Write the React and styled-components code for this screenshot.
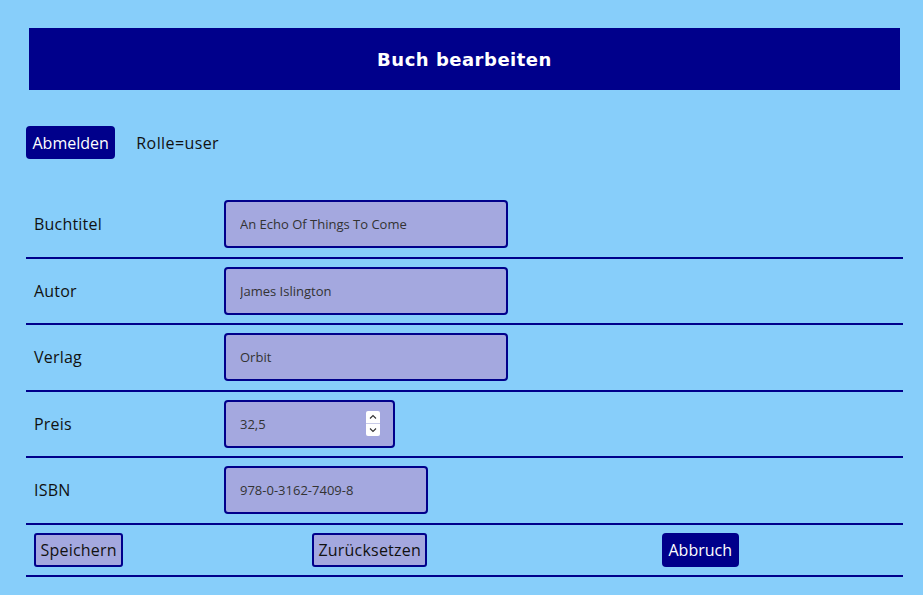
import React from "react";
import styled, { createGlobalStyle } from "styled-components";

const Global = createGlobalStyle`
  html, body { margin: 0; padding: 0; background: #87cefa; }
  body { font-family: "Open Sans", "Noto Sans", sans-serif; color: #111; }
  * { box-sizing: border-box; }
`;

const Page = styled.div`
  padding-top: 28px;
  min-height: 595px;
  background: #87cefa;
`;

const Header = styled.header`
  margin-left: 29px;
  width: 871px;
  height: 62px;
  background: #00008b;
  display: flex;
  align-items: center;
  justify-content: center;
`;

const Title = styled.h1`
  margin: 0;
  font-family: "DejaVu Sans", sans-serif;
  font-weight: bold;
  font-size: 18px;
  letter-spacing: 0.5px;
  color: #fff;
`;

const Toolbar = styled.div`
  margin: 36px 0 0 26px;
  display: flex;
  align-items: center;
  gap: 21px;
`;

const DarkButton = styled.button`
  height: 33px;
  padding: 0 6.5px;
  border: none;
  border-radius: 4px;
  background: #00008b;
  color: #fff;
  font-family: "Open Sans", sans-serif;
  font-size: 16px;
  cursor: pointer;
`;

const RoleText = styled.span`
  font-size: 16px;
  letter-spacing: 0.4px;
  color: #111;
`;

const Form = styled.div`
  margin: 33px 0 0 26px;
  width: 877px;
`;

const Row = styled.div`
  display: grid;
  grid-template-columns: ${(p) => p.$cols || "190px 1fr"};
  align-items: center;
  border-bottom: 2px solid #00008b;
`;

const Cell = styled.div`
  padding: 8.25px 8px;
  display: flex;
  align-items: center;
`;

const Label = styled.span`
  font-size: 16px;
  letter-spacing: 0.2px;
  color: #111;
`;

const fieldBox = `
  height: 48px;
  border: 2px solid #00008b;
  border-radius: 4px;
  background: #a4a8df;
  font-family: "Open Sans", sans-serif;
  font-size: 13px;
  color: #333;
`;

const TextInput = styled.input`
  ${fieldBox}
  width: ${(p) => p.$w}px;
  padding: 0 14px;
  outline: none;
`;

const NumberBox = styled.div`
  ${fieldBox}
  width: ${(p) => p.$w}px;
  display: flex;
  align-items: center;
  padding: 0 13px 0 14px;
`;

const BareInput = styled.input`
  flex: 1;
  min-width: 0;
  border: none;
  background: transparent;
  outline: none;
  padding: 0;
  font: inherit;
  color: inherit;
`;

const Spinner = styled.div`
  width: 14px;
  height: 25px;
  margin-top: -1px;
  display: flex;
  flex-direction: column;
  background: #fff;
  border-radius: 2px;
  overflow: hidden;
`;

const SpinHalf = styled.div`
  flex: 1;
  display: flex;
  align-items: center;
  justify-content: center;
  & + & { border-top: 1px solid #c8cbe8; }
`;

const LightButton = styled.button`
  height: 34px;
  padding: 0 4.5px;
  border: 2px solid #00008b;
  border-radius: 3px;
  background: #a4a8df;
  color: #111;
  font-family: "Open Sans", sans-serif;
  font-size: 16px;
  letter-spacing: 0.2px;
  cursor: pointer;
`;

const CancelButton = styled(DarkButton)`
  height: 34px;
`;

const Chevron = ({ up }) => (
  <svg width="8" height="6" viewBox="0 0 8 6">
    <path
      d={up ? "M1 4.5 L4 1.5 L7 4.5" : "M1 1.5 L4 4.5 L7 1.5"}
      fill="none"
      stroke="#333"
      strokeWidth="1.1"
    />
  </svg>
);

const fields = [
  { label: "Buchtitel", value: "An Echo Of Things To Come", w: 284 },
  { label: "Autor", value: "James Islington", w: 284 },
  { label: "Verlag", value: "Orbit", w: 284 },
  { label: "Preis", value: "32,5", w: 171, number: true },
  { label: "ISBN", value: "978-0-3162-7409-8", w: 204 },
];

export default function App() {
  return (
    <Page>
      <Global />
      <Header>
        <Title>Buch bearbeiten</Title>
      </Header>
      <Toolbar>
        <DarkButton>Abmelden</DarkButton>
        <RoleText>Rolle=user</RoleText>
      </Toolbar>
      <Form>
        {fields.map((f) => (
          <Row key={f.label}>
            <Cell>
              <Label>{f.label}</Label>
            </Cell>
            <Cell>
              {f.number ? (
                <NumberBox $w={f.w}>
                  <BareInput defaultValue={f.value} />
                  <Spinner>
                    <SpinHalf>
                      <Chevron up />
                    </SpinHalf>
                    <SpinHalf>
                      <Chevron />
                    </SpinHalf>
                  </Spinner>
                </NumberBox>
              ) : (
                <TextInput $w={f.w} defaultValue={f.value} />
              )}
            </Cell>
          </Row>
        ))}
        <Row $cols="278px 350px 1fr">
          <Cell>
            <LightButton>Speichern</LightButton>
          </Cell>
          <Cell>
            <LightButton>Zurücksetzen</LightButton>
          </Cell>
          <Cell>
            <CancelButton>Abbruch</CancelButton>
          </Cell>
        </Row>
      </Form>
    </Page>
  );
}
